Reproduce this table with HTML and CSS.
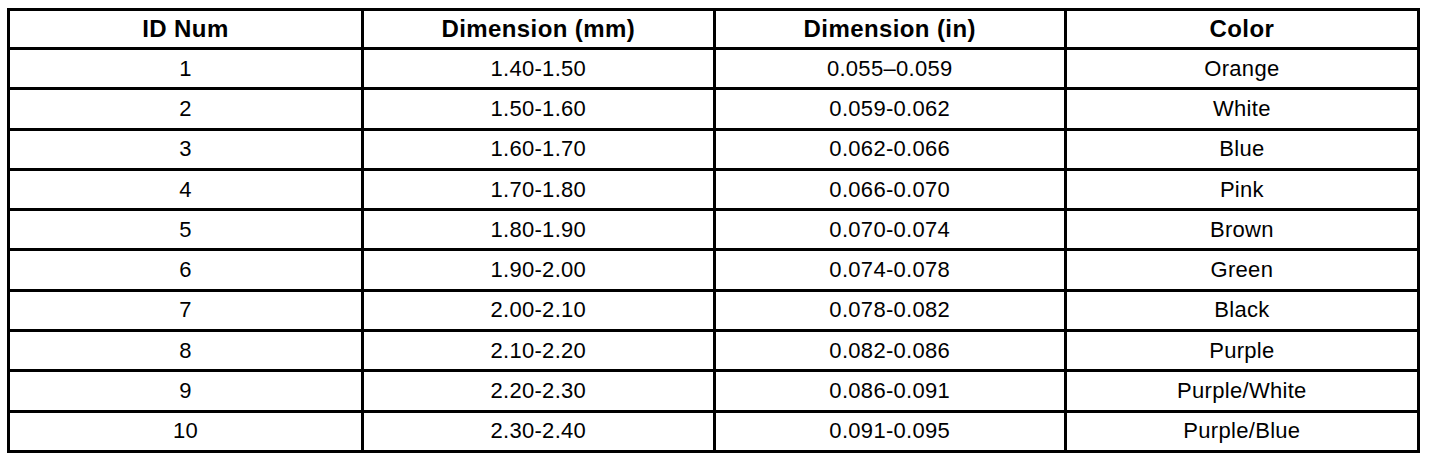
FILE: index.html
```html
<!DOCTYPE html>
<html lang="en">
<head>
  <meta charset="utf-8" />
  <meta name="viewport" content="width=device-width, initial-scale=1" />
  <title>Shim Sizes</title>
  <link rel="stylesheet" href="styles.css">
</head>
<body>
  <table class="sizes">
    <colgroup>
      <col class="c-id">
      <col class="c-mm">
      <col class="c-in">
      <col class="c-color">
    </colgroup>
    <thead>
      <tr>
        <th>ID Num</th>
        <th>Dimension (mm)</th>
        <th>Dimension (in)</th>
        <th>Color</th>
      </tr>
    </thead>
    <tbody>
      <tr><td>1</td><td>1.40-1.50</td><td>0.055&ndash;0.059</td><td>Orange</td></tr>
      <tr><td>2</td><td>1.50-1.60</td><td>0.059-0.062</td><td>White</td></tr>
      <tr><td>3</td><td>1.60-1.70</td><td>0.062-0.066</td><td>Blue</td></tr>
      <tr><td>4</td><td>1.70-1.80</td><td>0.066-0.070</td><td>Pink</td></tr>
      <tr><td>5</td><td>1.80-1.90</td><td>0.070-0.074</td><td>Brown</td></tr>
      <tr><td>6</td><td>1.90-2.00</td><td>0.074-0.078</td><td>Green</td></tr>
      <tr><td>7</td><td>2.00-2.10</td><td>0.078-0.082</td><td>Black</td></tr>
      <tr><td>8</td><td>2.10-2.20</td><td>0.082-0.086</td><td>Purple</td></tr>
      <tr><td>9</td><td>2.20-2.30</td><td>0.086-0.091</td><td>Purple/White</td></tr>
      <tr><td>10</td><td>2.30-2.40</td><td>0.091-0.095</td><td>Purple/Blue</td></tr>
    </tbody>
  </table>
</body>
</html>
```

FILE: styles.css
```css
html, body { background: #fff; }
body{
  margin: 8px 0 0 7px;
  font-family: "Liberation Sans", Arial, Helvetica, sans-serif;
  color: #000;
}

.sizes{
  width: 1413px;
  border-collapse: collapse;
  table-layout: fixed;
  border: 3px solid #000;
}
.sizes col.c-id{ width: 25.1%; }
.sizes col.c-mm{ width: 24.95%; }
.sizes col.c-in{ width: 24.9%; }

.sizes th, .sizes td{
  border: 3px solid #000;
  padding: 0;
  text-align: center;
  vertical-align: middle;
  white-space: nowrap;
}
.sizes th{
  height: 36px;
  font-size: 24px;
  font-weight: 700;
  letter-spacing: 0.4px;
}
.sizes td{
  height: 37.3px;
  font-size: 22px;
  font-weight: 400;
  letter-spacing: 0.3px;
}
```
